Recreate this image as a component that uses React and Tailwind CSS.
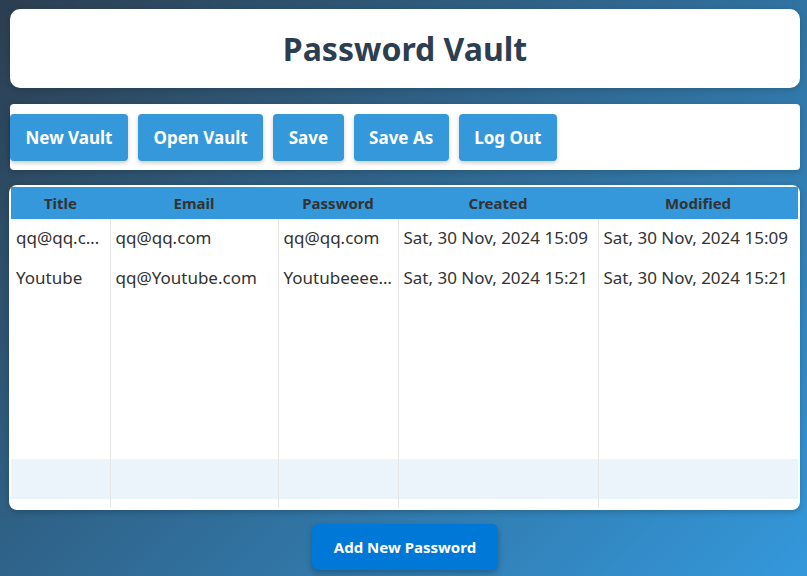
const rows = [
  {
    title: 'qq@qq.com',
    email: 'qq@qq.com',
    password: 'qq@qq.com',
    created: 'Sat, 30 Nov, 2024 15:09',
    modified: 'Sat, 30 Nov, 2024 15:09',
  },
  {
    title: 'Youtube',
    email: 'qq@Youtube.com',
    password: 'Youtubeeeeeeeee',
    created: 'Sat, 30 Nov, 2024 15:21',
    modified: 'Sat, 30 Nov, 2024 15:21',
  },
];

const cols = ['Title', 'Email', 'Password', 'Created', 'Modified'];

function ToolButton({ children }) {
  return (
    <button className="h-[47px] px-[15.5px] rounded bg-[#3498db] text-white font-bold text-[17px] shadow-[0_2px_4px_rgba(0,0,0,0.2)]">
      {children}
    </button>
  );
}

function Cell({ children, last }) {
  return (
    <td className={`px-[5px] pb-[3px] truncate text-[17px] text-[#333] ${last ? '' : 'border-r border-[#e6e6e6]'}`}>
      {children}
    </td>
  );
}

export default function App() {
  return (
    <div
      className="w-[807px] h-[576px] overflow-hidden bg-[linear-gradient(135deg,#2c3e50,#3498db)] pt-[9px]"
      style={{ fontFamily: '"Noto Sans", "Open Sans", sans-serif' }}
    >
      {/* Header */}
      <div className="ml-[10px] w-[790px] h-[79px] bg-white rounded-[10px] shadow-[0_2px_6px_rgba(0,0,0,0.15)] flex items-center justify-center">
        <h1 className="text-[32px] font-bold text-[#2c3e50] leading-none">Password Vault</h1>
      </div>

      {/* Toolbar */}
      <div className="ml-[10px] w-[790px] mt-[16px] h-[66px] bg-white rounded shadow-[0_2px_6px_rgba(0,0,0,0.15)] pt-[10px] flex gap-[10px]">
        <ToolButton>New Vault</ToolButton>
        <ToolButton>Open Vault</ToolButton>
        <ToolButton>Save</ToolButton>
        <ToolButton>Save As</ToolButton>
        <ToolButton>Log Out</ToolButton>
      </div>

      {/* Table */}
      <div className="ml-[9px] w-[791px] mt-[15px] h-[325px] bg-white rounded-lg shadow-[0_2px_6px_rgba(0,0,0,0.2)] pt-[2px] px-[2px]">
        <table className="table-fixed w-[787px] border-collapse">
          <colgroup>
            <col className="w-[99px]" />
            <col className="w-[168px]" />
            <col className="w-[120px]" />
            <col className="w-[200px]" />
            <col className="w-[200px]" />
          </colgroup>
          <thead>
            <tr className="h-[32px] bg-[#3498db]">
              {cols.map((c) => (
                <th key={c} className="text-[15px] font-bold text-[#333] text-center">
                  {c}
                </th>
              ))}
            </tr>
          </thead>
          <tbody>
            {rows.map((r) => (
              <tr key={r.title} className="h-[40px]">
                <Cell>{r.title}</Cell>
                <Cell>{r.email}</Cell>
                <Cell>{r.password}</Cell>
                <Cell>{r.created}</Cell>
                <Cell last>{r.modified}</Cell>
              </tr>
            ))}
            <tr className="h-[160px]">
              <Cell /><Cell /><Cell /><Cell /><Cell last />
            </tr>
            <tr className="h-[40px] bg-[#ebf3fb]">
              <Cell /><Cell /><Cell /><Cell /><Cell last />
            </tr>
            <tr className="h-[9px]">
              <Cell /><Cell /><Cell /><Cell /><Cell last />
            </tr>
          </tbody>
        </table>
      </div>

      {/* Add button */}
      <div className="flex justify-center mt-[14px] pl-[3px]">
        <button className="w-[186px] h-[46px] rounded-md bg-[#0078d7] text-white font-bold text-[15px] shadow-[0_3px_6px_rgba(0,0,0,0.25)]">
          Add New Password
        </button>
      </div>
    </div>
  );
}
